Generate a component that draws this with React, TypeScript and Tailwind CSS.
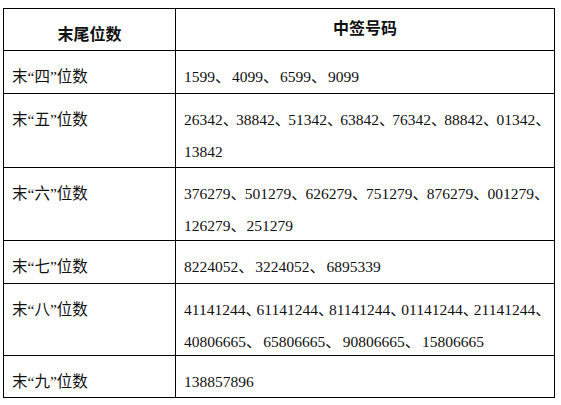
import React from "react";

type Line = {
  text: string;
  sep: string; // tracking on each 、 so its slot matches the source doc's spacing
};

type Row = {
  label: string;
  lines: Line[];
  h: string;
};

const rows: Row[] = [
  { label: "末“四”位数", lines: [{ text: "1599、4099、6599、9099", sep: "tracking-[1.5px]" }], h: "h-[43px]" },
  {
    label: "末“五”位数",
    lines: [
      { text: "26342、38842、51342、63842、76342、88842、01342、", sep: "tracking-[-2.2px]" },
      { text: "13842", sep: "tracking-[0px]" },
    ],
    h: "h-[74px]",
  },
  {
    label: "末“六”位数",
    lines: [
      { text: "376279、501279、626279、751279、876279、001279、", sep: "tracking-[-1.3px]" },
      { text: "126279、251279", sep: "tracking-[0.5px]" },
    ],
    h: "h-[73px]",
  },
  { label: "末“七”位数", lines: [{ text: "8224052、3224052、6895339", sep: "tracking-[1.5px]" }], h: "h-[43px]" },
  {
    label: "末“八”位数",
    lines: [
      { text: "41141244、61141244、81141244、01141244、21141244、", sep: "tracking-[-4.5px]" },
      { text: "40806665、65806665、90806665、15806665", sep: "tracking-[1.8px]" },
    ],
    h: "h-[72px]",
  },
  { label: "末“九”位数", lines: [{ text: "138857896", sep: "tracking-[0px]" }], h: "h-[42px]" },
];

function NumberLine({ line }: { line: Line }) {
  const parts = line.text.split("、");
  return (
    <div className="whitespace-nowrap">
      {parts.map((part, i) => (
        <React.Fragment key={i}>
          {part}
          {i < parts.length - 1 && <span className={line.sep}>、</span>}
        </React.Fragment>
      ))}
    </div>
  );
}

export default function App() {
  return (
    <div className="w-[561px] h-[405px] bg-white pt-[8px] pl-[3px] font-['Liberation_Serif','Noto_Sans_CJK_SC',serif] text-[#111]">
      <div className="w-[552px] border-t border-l border-r border-black">
        {/* header */}
        <div className="grid grid-cols-[172px_1fr] h-[42px] border-b border-black">
          <div className="border-r border-black text-center font-bold text-[16px] leading-[32px] pt-[8px] font-['Noto_Sans_CJK_SC',sans-serif]">
            末尾位数
          </div>
          <div className="text-center font-bold text-[16px] leading-[32px] pt-[2px] font-['Noto_Sans_CJK_SC',sans-serif]">
            中签号码
          </div>
        </div>

        {rows.map((row) => (
          <div
            key={row.label}
            className={`grid grid-cols-[172px_1fr] border-b border-black overflow-hidden ${row.h}`}
          >
            <div className="border-r border-black pl-[8px] pt-[10px] text-[15.5px] leading-[32px]">
              {row.label}
            </div>
            <div className="pl-[8px] pt-[10px] text-[15.5px] leading-[32px]">
              {row.lines.map((line) => (
                <NumberLine key={line.text} line={line} />
              ))}
            </div>
          </div>
        ))}
      </div>
    </div>
  );
}
